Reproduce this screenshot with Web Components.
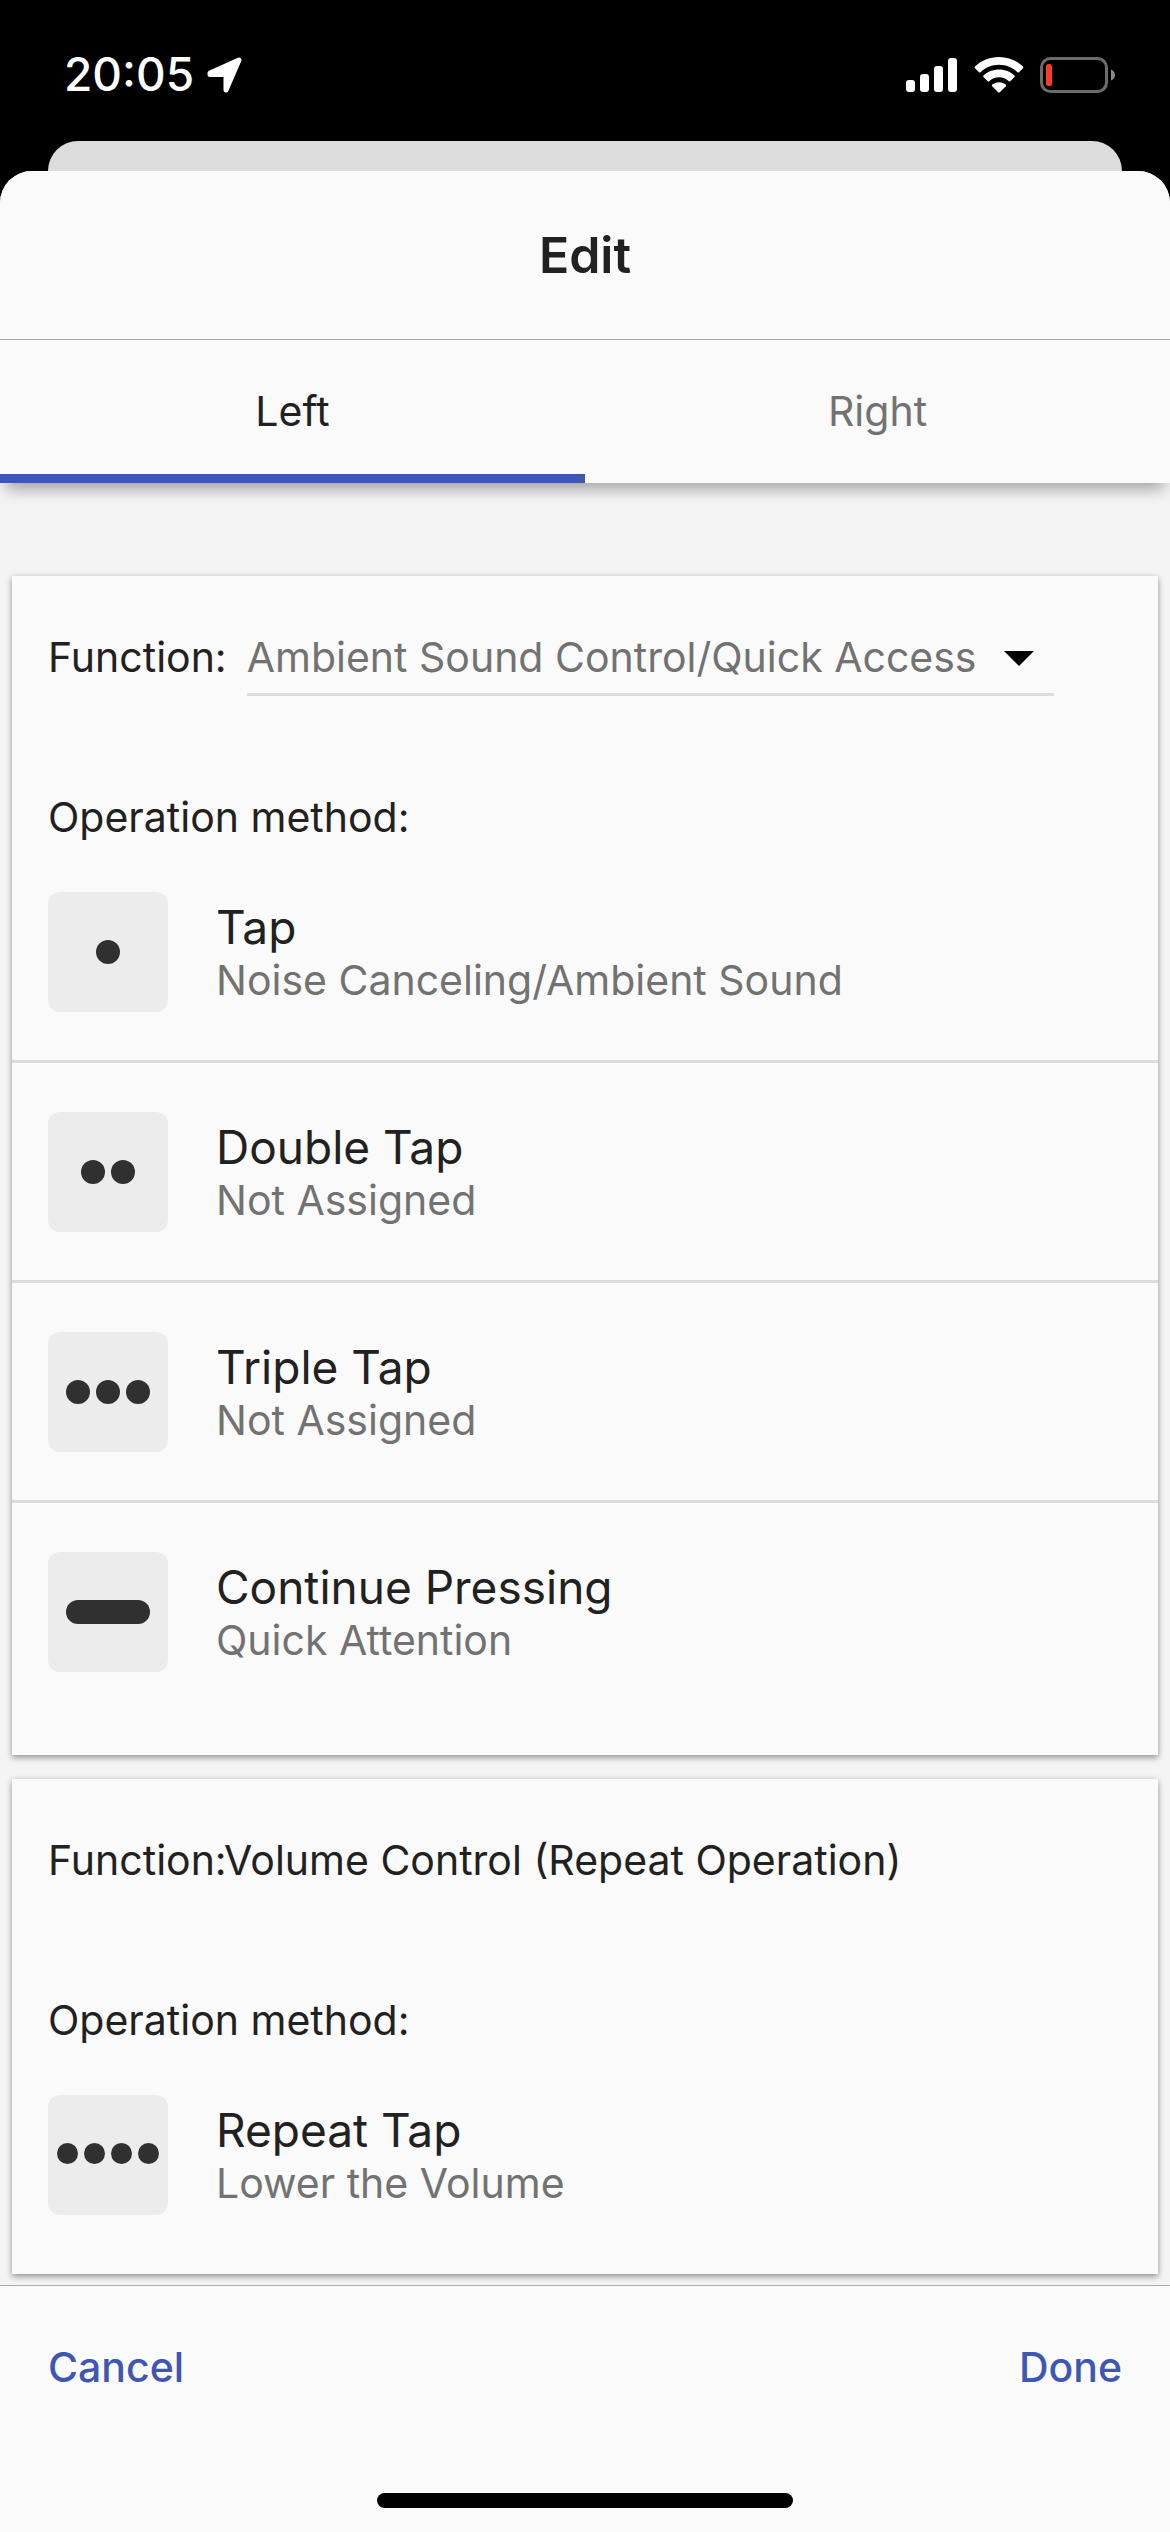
<!DOCTYPE html>
<html lang="en">
<head>
<meta charset="utf-8">
<meta name="viewport" content="width=device-width, initial-scale=1">
<title>Edit</title>
<style>
  html { background: #000; }
  body {
    margin: 0;
    min-height: 100vh;
    display: flex;
    flex-direction: column;
    font: 400 41px/51px Inter, "Liberation Sans", sans-serif;
    color: #212121;
    --surface: #fafafa;
    --muted: #727272;
    --line: #dcdcdc;
    --accent: #3f57b3;
  }
  edit-sheet { flex: 1; }
</style>
</head>
<body>
<status-bar>20:05</status-bar>
<edit-sheet>
  <span slot="title">Edit</span>
  <tab-strip slot="tabs" labels="Left,Right"></tab-strip>
  <function-card>
    <function-select slot="function" label="Function:" options="Ambient Sound Control/Quick Access"></function-select>
    <tap-row icon="1"><span slot="name">Tap</span>Noise Canceling/Ambient Sound</tap-row>
    <tap-row icon="2"><span slot="name">Double Tap</span>Not Assigned</tap-row>
    <tap-row icon="3"><span slot="name">Triple Tap</span>Not Assigned</tap-row>
    <tap-row icon="hold"><span slot="name">Continue Pressing</span>Quick Attention</tap-row>
  </function-card>
  <function-card compact>
    <span slot="function">Function:Volume Control (Repeat Operation)</span>
    <tap-row icon="4"><span slot="name">Repeat Tap</span>Lower the Volume</tap-row>
  </function-card>
  <action-bar slot="footer" cancel="Cancel" done="Done"></action-bar>
</edit-sheet>

<script>
  const define = (name, render, ready) => customElements.define(name, class extends HTMLElement {
    connectedCallback() {
      if (this.shadowRoot) return;
      this.attachShadow({ mode: 'open' }).innerHTML = render(this);
      if (ready) ready(this);
    }
  });

  define('status-bar', () => `
    <style>
      :host { display: flex; justify-content: space-between; align-items: center; box-sizing: border-box;
        height: 141px; padding: 8px 54px 0 64px; background: #000; color: #fff; font-size: 46px; font-weight: 500; }
      div { display: flex; align-items: center; }
      .time { gap: 12px; }
      .signs { gap: 16px; }
      svg { display: block; }
    </style>
    <div class="time"><slot></slot>
      <svg width="38" height="38" viewBox="0 0 38 38" aria-hidden="true">
        <path d="M4 17 33 4 20 34V18.500H4Z" fill="#fff" stroke="#fff" stroke-width="5" stroke-linejoin="round"/>
      </svg>
    </div>
    <div class="signs">
      <svg width="52" height="36" viewBox="0 0 52 36" fill="#fff" aria-hidden="true">
        <rect x="0" y="23" width="9" height="12" rx="3"/><rect x="14" y="17" width="9" height="18" rx="3"/>
        <rect x="28" y="9" width="9" height="26" rx="3"/><rect x="42" y="1" width="9" height="34" rx="3"/>
      </svg>
      <svg width="50" height="38" viewBox="0 0 50 38" fill="#fff" aria-hidden="true">
        <path d="M25 1C34.500 1 43 4.700 49 10.600Q49.700 11.400 49 12.200L45 16.200Q44.200 16.800 43.500 16.200C38.500 11.500 32 8.800 25 8.800S11.500 11.500 6.500 16.200Q5.800 16.800 5 16.200L1 12.200Q.3 11.400 1 10.600C7 4.700 15.500 1 25 1Z"/>
        <path d="M25 13.500C31.200 13.500 36.500 15.800 40.500 19.500Q41.200 20.300 40.500 21L36.300 25.200Q35.600 25.800 34.800 25.200C32 22.800 28.800 21.300 25 21.300S18 22.800 15.200 25.200Q14.400 25.800 13.700 25.200L9.500 21Q8.800 20.300 9.500 19.500C13.500 15.800 18.800 13.500 25 13.500Z"/>
        <path d="M25 26.200C27.800 26.200 30 27.200 31.800 28.600Q32.500 29.400 31.800 30.200L25.800 36.200Q25 36.900 24.200 36.200L18.200 30.200Q17.500 29.400 18.200 28.600C20 27.200 22.200 26.200 25 26.200Z"/>
      </svg>
      <svg width="76" height="36" viewBox="0 0 76 36" aria-hidden="true">
        <rect x="1.500" y="1.500" width="65" height="33" rx="9" fill="none" stroke="#6c6c6c" stroke-width="3"/>
        <rect x="6" y="7" width="6" height="22" rx="2.500" fill="#ff3b30"/>
        <path d="M71 12.500Q75 14 75 18T71 23.500Z" fill="#8a8a8a"/>
      </svg>
    </div>`);

  define('edit-sheet', () => `
    <style>
      :host { display: flex; flex-direction: column; background: #000; }
      .behind { height: 30px; margin: 0 48px; border-radius: 30px 30px 0 0; background: #dcdcdc; }
      .sheet { flex: 1; display: flex; flex-direction: column; border-radius: 32px 32px 0 0; overflow: hidden; background: #f4f4f4; }
      h1 { margin: 0; padding: 54px 0; line-height: 60px; font-size: 50px; font-weight: 600; text-align: center;
        background: var(--surface); border-bottom: 1px solid #acacac; }
      main { flex: 1; display: flex; flex-direction: column; gap: 24px; padding: 93px 12px 11px; }
    </style>
    <div class="behind"></div>
    <div class="sheet">
      <h1><slot name="title"></slot></h1>
      <slot name="tabs"></slot>
      <main><slot></slot></main>
      <slot name="footer"></slot>
    </div>`);

  define('tab-strip', el => `
    <style>
      :host { display: block; position: relative; z-index: 1; background: var(--surface);
        box-shadow: 0 12px 15px -6px rgba(0,0,0,.34); }
      div { display: flex; }
      button { flex: 1; padding: 46px 0; border: 0; background: none; font: inherit; color: var(--muted); }
      button[aria-selected=true] { color: inherit; box-shadow: inset 0 -9px var(--accent); }
    </style>
    <div role="tablist">${el.getAttribute('labels').split(',').map((t, i) =>
      `<button role="tab" aria-selected="${i === 0}">${t}</button>`).join('')}</div>`,
    el => {
      const tabs = [...el.shadowRoot.querySelectorAll('button')];
      tabs.forEach(tab => tab.addEventListener('click', () =>
        tabs.forEach(t => t.setAttribute('aria-selected', t === tab))));
    });

  define('function-card', () => `
    <style>
      :host { display: block; padding: 56px 0 35px; background: var(--surface);
        box-shadow: 0 3px 6px rgba(0,0,0,.34), 0 0 6px rgba(0,0,0,.1); }
      :host([compact]) { padding-bottom: 11px; }
      .function { min-height: 64px; padding: 0 36px; }
      h2 { margin: 96px 36px 0; font: inherit; }
      ::slotted(tap-row:not(:last-child)) { border-bottom: 3px solid var(--line); }
    </style>
    <div class="function"><slot name="function"></slot></div>
    <h2>Operation method:</h2>
    <slot></slot>`);

  define('function-select', el => `
    <style>
      :host { display: flex; gap: 20px; padding-right: 68px; }
      .field { flex: 1; display: flex; position: relative; border-bottom: 3px solid var(--line); }
      select { flex: 1; min-width: 0; height: 61px; padding: 0 0 10px; border: 0; border-radius: 0; appearance: none;
        background: none; font: inherit; color: var(--muted); }
      svg { position: absolute; right: 20px; top: 19px; pointer-events: none; }
    </style>
    <label for="fn">${el.getAttribute('label')}</label>
    <div class="field">
      <select id="fn">${el.getAttribute('options').split(',').map(o => `<option>${o}</option>`).join('')}</select>
      <svg width="30" height="15" viewBox="0 0 30 15" aria-hidden="true"><path d="M0 0H30L15 15Z"/></svg>
    </div>`);

  define('tap-row', el => {
    const icon = el.getAttribute('icon');
    const marks = icon === 'hold' ? '<i class="bar"></i>' : '<i></i>'.repeat(Number(icon));
    return `
    <style>
      :host { display: flex; align-items: center; gap: 48px; padding: 49px 36px 48px; }
      .icon { flex: none; display: flex; align-items: center; justify-content: center; gap: 6px;
        width: 120px; height: 120px; border-radius: 12px; background: #ececec; }
      i { width: 24px; height: 24px; border-radius: 12px; background: #303030; }
      .bar { width: 84px; }
      .small { box-sizing: border-box; padding-bottom: 3px; }
      .small i { width: 21px; height: 21px; }
      .name { font-size: 46px; line-height: 56px; }
      .value { color: var(--muted); }
    </style>
    <div class="icon ${icon === '4' ? 'small' : ''}">${marks}</div>
    <div><div class="name"><slot name="name"></slot></div><div class="value"><slot></slot></div></div>`;
  });

  define('action-bar', el => `
    <style>
      :host { display: block; padding: 56px 48px 24px; background: var(--surface); border-top: 1px solid #acacac; }
      .buttons { display: flex; justify-content: space-between; }
      button { padding: 0; border: 0; background: none; font: inherit; font-weight: 500; color: var(--accent); }
      .home { width: 416px; height: 15px; margin: 100px auto 0; border-radius: 8px; background: #000; }
    </style>
    <div class="buttons"><button>${el.getAttribute('cancel')}</button><button>${el.getAttribute('done')}</button></div>
    <div class="home"></div>`);
</script>
</body>
</html>
